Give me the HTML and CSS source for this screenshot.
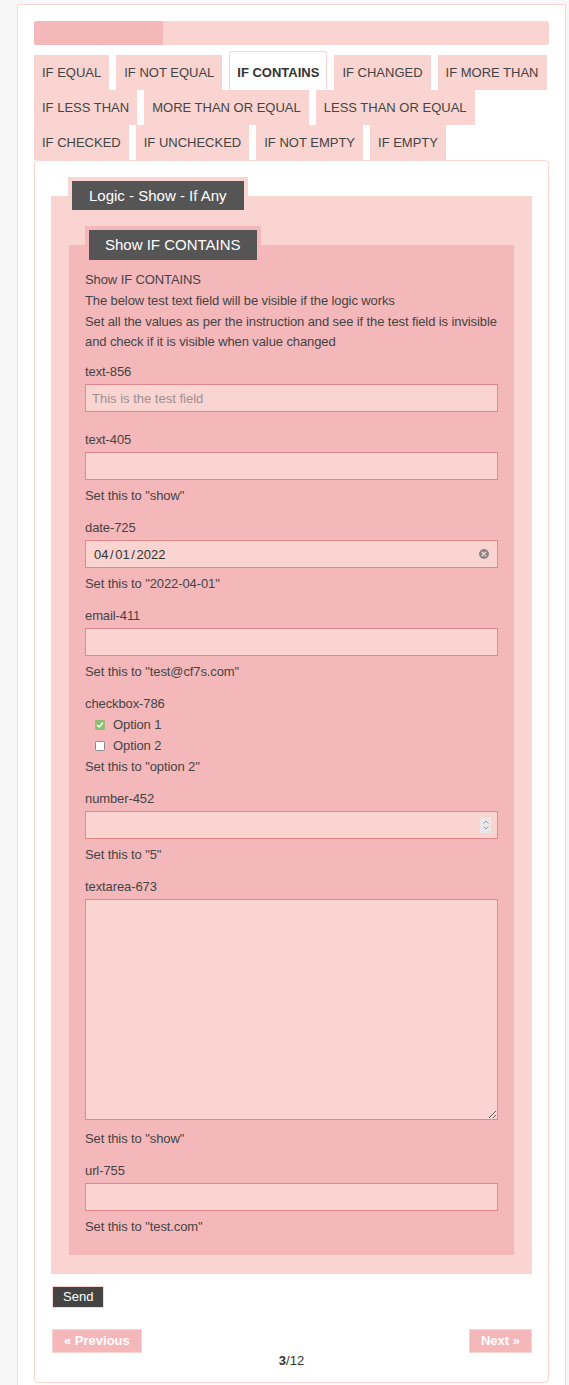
FILE: index.html
```html
<!DOCTYPE html>
<html lang="en">
<head>
<meta charset="utf-8">
<title>Logic - Show - If Any</title>
<link rel="stylesheet" href="styles.css">
</head>
<body>
<div class="wrap">
  <div class="progress"><div class="progress-fill" style="width:25%"></div></div>
  <ul class="tabs">
    <li class="tab">IF EQUAL</li>
    <li class="tab">IF NOT EQUAL</li>
    <li class="tab active">IF CONTAINS</li>
    <li class="tab">IF CHANGED</li>
    <li class="tab">IF MORE THAN</li>
    <li class="tab">IF LESS THAN</li>
    <li class="tab">MORE THAN OR EQUAL</li>
    <li class="tab">LESS THAN OR EQUAL</li>
    <li class="tab">IF CHECKED</li>
    <li class="tab">IF UNCHECKED</li>
    <li class="tab">IF NOT EMPTY</li>
    <li class="tab">IF EMPTY</li>
  </ul>
  <div class="panel">
    <form class="form">
      <fieldset class="outer">
        <legend class="legend legend-outer"><span class="legend-text">Logic - Show - If Any</span></legend>
        <fieldset class="inner">
          <legend class="legend legend-inner"><span class="legend-text legend-text-inner">Show IF CONTAINS</span></legend>
          <div class="intro">Show IF CONTAINS<br>The below test text field will be visible if the logic works<br>Set all the values as per the instruction and see if the test field is invisible<br>and check if it is visible when value changed</div>

          <div class="group group-first">
            <label class="label">text-856</label>
            <input class="field" type="text" placeholder="This is the test field">
          </div>

          <div class="group">
            <label class="label">text-405</label>
            <input class="field" type="text">
            <div class="help">Set this to "show"</div>
          </div>

          <div class="group">
            <label class="label">date-725</label>
            <div class="field field-date">
              <span class="date-value">04 / 01 / 2022</span>
              <svg class="clear-icon" width="10" height="10" viewBox="0 0 10 10"><circle cx="5" cy="5" r="5" fill="#8a8486"/><path d="M3.2 3.2 L6.8 6.8 M6.8 3.2 L3.2 6.8" stroke="#fad4d0" stroke-width="1.4" stroke-linecap="round"/></svg>
            </div>
            <div class="help">Set this to "2022-04-01"</div>
          </div>

          <div class="group">
            <label class="label">email-411</label>
            <input class="field" type="text">
            <div class="help">Set this to "test@cf7s.com"</div>
          </div>

          <div class="group">
            <label class="label">checkbox-786</label>
            <div class="opt"><span class="box box-checked"><svg width="8" height="8" viewBox="0 0 8 8"><path d="M1.4 4.2 L3.2 6 L6.6 2" fill="none" stroke="#fff" stroke-width="1.5" stroke-linecap="round" stroke-linejoin="round"/></svg></span>Option 1</div>
            <div class="opt"><span class="box"></span>Option 2</div>
            <div class="help help-tight">Set this to "option 2"</div>
          </div>

          <div class="group">
            <label class="label">number-452</label>
            <div class="field field-number">
              <span class="spinner"><svg width="10" height="14" viewBox="0 0 10 14"><path d="M2.5 5.5 L5 3 L7.5 5.5 M2.5 8.5 L5 11 L7.5 8.5" fill="none" stroke="#9a9a9a" stroke-width="1"/></svg></span>
            </div>
            <div class="help">Set this to "5"</div>
          </div>

          <div class="group">
            <label class="label">textarea-673</label>
            <textarea class="field field-area"></textarea>
            <div class="help">Set this to "show"</div>
          </div>

          <div class="group group-last">
            <label class="label">url-755</label>
            <input class="field" type="text">
            <div class="help">Set this to "test.com"</div>
          </div>
        </fieldset>
      </fieldset>
      <div class="actions"><button class="send" type="button">Send</button></div>
      <div class="pager">
        <button class="page-btn" type="button">« Previous</button>
        <button class="page-btn" type="button">Next »</button>
      </div>
      <div class="counter"><b>3</b>/12</div>
    </form>
  </div>
</div>
</body>
</html>
```

FILE: styles.css
```css
html, body {
  margin: 0;
  padding: 0;
}
body {
  background: #f7f7f7;
  font-family: "Liberation Sans", Arial, sans-serif;
  font-size: 13px;
  color: #444;
}
.wrap {
  margin: 4px 3px 0 17px;
  background: #fff;
  border: 1px solid #fbd8d4;
  border-bottom: none;
  padding: 16px 16px 20px;
}
.progress {
  height: 24px;
  background: #fad4d0;
  border-radius: 3px;
  overflow: hidden;
}
.progress-fill {
  height: 100%;
  background: #f5b8ba;
}
.tabs {
  display: flex;
  flex-wrap: wrap;
  column-gap: 7px;
  list-style: none;
  margin: 6px 0 0;
  padding: 4px 0 0;
}
.tab {
  box-sizing: border-box;
  height: 35px;
  line-height: 33px;
  padding: 0 7px;
  border: 1px solid #fad4d0;
  background: #fad4d0;
  color: #444;
  white-space: nowrap;
}
.tab.active {
  height: 39px;
  margin-top: -4px;
  padding-top: 4px;
  background: #fff;
  border-color: #fad4d0;
  border-bottom-color: #fff;
  border-radius: 3px 3px 0 0;
  font-weight: bold;
  color: #333;
}
.panel {
  border: 1px solid #fad4d0;
  border-radius: 4px;
  padding: 16px 16px 13px;
}
.form {
  margin: 0;
}
fieldset {
  margin: 0;
  border: 0;
  min-width: 0;
}
.outer {
  background: #fad4d0;
  padding: 12px 18px 19px;
}
.inner {
  background: #f5b8ba;
  padding: 6px 16px 18px;
  letter-spacing: -0.1px;
}
.legend {
  padding: 4px;
}
.legend-outer {
  background: #fad4d0;
  margin-left: -1px;
}
.legend-inner {
  background: #f5b8ba;
}
.legend-text {
  display: block;
  background: #555;
  color: #fff;
  font-size: 15px;
  line-height: 29px;
  padding: 0 17px;
  letter-spacing: 0;
}
.legend-text-inner {
  line-height: 30px;
  padding: 0 16px;
}
.intro {
  line-height: 20.8px;
  white-space: nowrap;
  margin-bottom: 8px;
}
.group {
  margin-bottom: 11px;
}
.group-first {
  margin-bottom: 17px;
}
.group-last {
  margin-bottom: 0;
}
.label {
  display: block;
  line-height: 21px;
}
.field {
  display: block;
  box-sizing: border-box;
  width: 100%;
  height: 28px;
  margin: 2px 0 0;
  padding: 0 6px;
  border: 1px solid #e4878d;
  background: #fad4d0;
  font-family: "Liberation Sans", Arial, sans-serif;
  font-size: 13px;
  color: #333;
  outline: none;
}
.field::placeholder {
  color: #9d8f90;
}
.field-date {
  display: flex;
  align-items: center;
  justify-content: space-between;
  padding: 0 8px 0 8px;
}
.date-value {
  color: #333;
  word-spacing: -2px;
  letter-spacing: 0;
}
.field-number {
  display: flex;
  align-items: center;
  justify-content: flex-end;
  padding: 0 6px;
}
.spinner {
  display: flex;
  align-items: center;
  justify-content: center;
  width: 11px;
  height: 16px;
  background: #ebe7e9;
}
.spinner svg {
  display: block;
}
.field-area {
  height: 221px;
  resize: vertical;
  margin-bottom: 8px;
}
.help {
  line-height: 21px;
  margin-top: 5px;
}
.help-tight {
  margin-top: 0;
}
.opt {
  display: flex;
  align-items: center;
  gap: 8px;
  padding-left: 10px;
  line-height: 21px;
}
.box {
  box-sizing: border-box;
  width: 10px;
  height: 10px;
  border: 1px solid #8a8a8a;
  border-radius: 1.5px;
  background: #fff;
  display: flex;
  align-items: center;
  justify-content: center;
}
.box-checked {
  background: #8dbd6e;
  border-color: #8dbd6e;
}
.box svg {
  display: block;
}
.actions {
  margin-top: 12px;
  padding-left: 1px;
}
.send {
  display: block;
  height: 22px;
  padding: 0 10px;
  border: 1px solid #fad4d0;
  background: #444;
  color: #fff;
  font-family: "Liberation Sans", Arial, sans-serif;
  font-size: 13px;
  line-height: 20px;
  cursor: pointer;
}
.pager {
  display: flex;
  justify-content: space-between;
  margin-top: 21px;
  padding: 0 0 0 1px;
}
.page-btn {
  height: 24px;
  padding: 0 11px;
  border: 1px solid #fad4d0;
  background: #f5b8ba;
  color: #fff;
  font-family: "Liberation Sans", Arial, sans-serif;
  font-size: 13px;
  font-weight: bold;
  line-height: 22px;
  cursor: pointer;
}
.counter {
  text-align: center;
  line-height: 16px;
  color: #333;
}
```
